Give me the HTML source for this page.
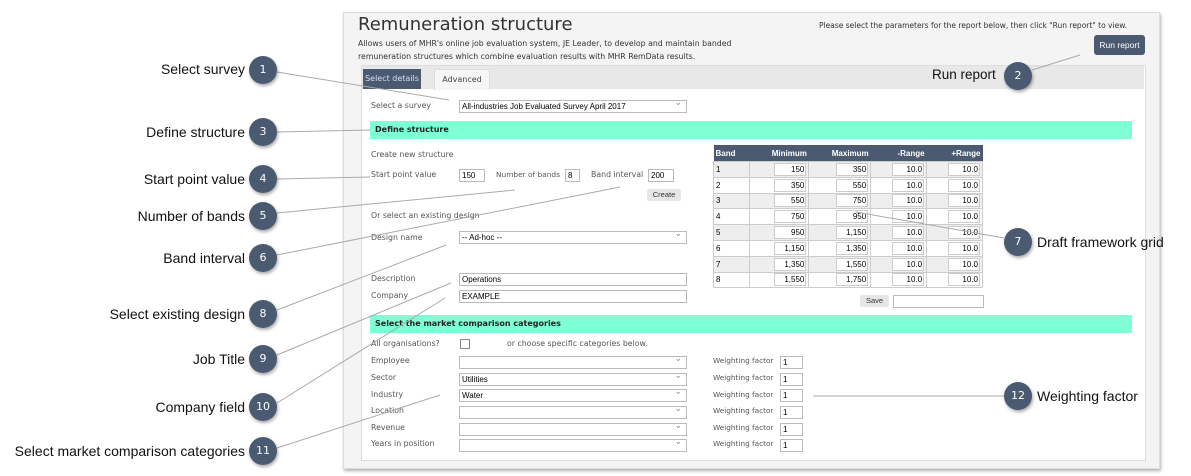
<!DOCTYPE html><html><head><style>
body{margin:0;width:1191px;height:476px;background:#fff;position:relative;font-family:"DejaVu Sans",sans-serif;overflow:hidden}
.a{position:absolute}
.lbl{position:absolute;font-size:14px;color:#111;text-align:right;font-family:"Liberation Sans",sans-serif;white-space:nowrap}
.c{position:absolute;width:28px;height:28px;border-radius:50%;background:#4a5a70;color:#fff;font-size:11px;text-align:center;line-height:28px;box-shadow:1px 2px 3px rgba(0,0,0,.35)}
.t{position:absolute;font-size:7.8px;color:#555;white-space:nowrap}
.in{position:absolute;background:#fff;border:1px solid #bbb;height:11px;font-size:8px;font-family:"Liberation Sans",sans-serif;line-height:11px;padding:0 2px;box-sizing:content-box;color:#000}
.sel::after{content:"⌄";position:absolute;right:4px;top:-4px;color:#888;font-size:9px}
.g{position:absolute;left:370px;width:762px;height:18px;background:#7fffd4;font-size:8px;font-weight:bold;color:#222;line-height:18px;text-indent:5px}
table{border-collapse:collapse;font-family:"Liberation Sans",sans-serif;font-size:8px}
td{border:1px solid #ccc;height:14.8px;padding:0 2px;vertical-align:middle}
th{background:#4a5a70;color:#fff;height:16px;font-weight:bold;text-align:right;padding:0 2px}
.n{display:inline-block;width:29px;height:11px;border:1px solid #ccc;background:#fff;text-align:right;padding-right:1px;line-height:11px}
tr:nth-child(even) td{background:#eee}
</style></head><body>
<div class="a" style="left:343px;top:12px;width:815px;height:455px;background:#f4f4f5;border:1px solid #ddd;box-shadow:1px 2px 3px rgba(0,0,0,.3)"></div>
<div class="a" style="left:358px;top:14px;font-size:18px;color:#333">Remuneration structure</div>
<div class="t" style="left:358px;top:37px;color:#333;line-height:13px">Allows users of MHR's online job evaluation system, JE Leader, to develop and maintain banded<br>remuneration structures which combine evaluation results with MHR RemData results.</div>
<div class="t" style="left:819px;top:21px;color:#333;font-size:7.5px">Please select the parameters for the report below, then click "Run report" to view.</div>
<div class="a" style="left:1094px;top:35px;width:51px;height:20px;background:#4a5a70;border-radius:3px;color:#fff;font-size:8.5px;font-family:'Liberation Sans',sans-serif;text-align:center;line-height:20px">Run report</div>
<div class="a" style="left:361px;top:65px;width:783px;height:394px;background:#fff;border:1px solid #ddd"></div>
<div class="a" style="left:362px;top:66px;width:782px;height:23px;background:#e8e8e8"></div>
<div class="a" style="left:363px;top:69px;width:58px;height:20px;background:#4a5a70;color:#dde;font-size:8px;text-align:center;line-height:20px">Select details</div>
<div class="a" style="left:434px;top:69px;width:54px;height:20px;background:#f6f6f6;border:1px solid #ddd;border-bottom:none;color:#444;font-size:8px;text-align:center;line-height:20px">Advanced</div>
<div class="t" style="left:371px;top:101px">Select a survey</div>
<div class="in sel" style="left:459px;top:100px;width:222px">All-industries Job Evaluated Survey April 2017</div>
<div class="g" style="top:121px">Define structure</div>
<div class="t" style="left:371px;top:150px">Create new structure</div>
<div class="t" style="left:371px;top:170px">Start point value</div>
<div class="in" style="left:459px;top:169px;width:20px">150</div>
<div class="t" style="left:496px;top:170px;font-size:7.4px">Number of bands</div>
<div class="in" style="left:565px;top:169px;width:9px">8</div>
<div class="t" style="left:591px;top:170px">Band interval</div>
<div class="in" style="left:648px;top:169px;width:20px">200</div>
<div class="a" style="left:647px;top:189px;width:34px;height:12px;background:#e6e6e6;border-radius:2px;font-size:7.5px;font-family:'Liberation Sans',sans-serif;text-align:center;line-height:12px;color:#333">Create</div>
<div class="t" style="left:371px;top:211px">Or select an existing design</div>
<div class="t" style="left:371px;top:233px">Design name</div>
<div class="in sel" style="left:459px;top:231px;width:222px">-- Ad-hoc --</div>
<div class="t" style="left:371px;top:274px">Description</div>
<div class="in" style="left:459px;top:273px;width:222px">Operations</div>
<div class="t" style="left:371px;top:291px">Company</div>
<div class="in" style="left:459px;top:290px;width:222px">EXAMPLE</div>
<table class="a" style="left:713px;top:145px;width:270px">
<tr><th style="text-align:left">Band</th><th>Minimum</th><th>Maximum</th><th>-Range</th><th>+Range</th></tr>
<tr><td>1</td><td align=right><span class=n>150</span></td><td align=right><span class=n>350</span></td><td align=right><span class=n>10.0</span></td><td align=right><span class=n>10.0</span></td></tr>
<tr><td>2</td><td align=right><span class=n>350</span></td><td align=right><span class=n>550</span></td><td align=right><span class=n>10.0</span></td><td align=right><span class=n>10.0</span></td></tr>
<tr><td>3</td><td align=right><span class=n>550</span></td><td align=right><span class=n>750</span></td><td align=right><span class=n>10.0</span></td><td align=right><span class=n>10.0</span></td></tr>
<tr><td>4</td><td align=right><span class=n>750</span></td><td align=right><span class=n>950</span></td><td align=right><span class=n>10.0</span></td><td align=right><span class=n>10.0</span></td></tr>
<tr><td>5</td><td align=right><span class=n>950</span></td><td align=right><span class=n>1,150</span></td><td align=right><span class=n>10.0</span></td><td align=right><span class=n>10.0</span></td></tr>
<tr><td>6</td><td align=right><span class=n>1,150</span></td><td align=right><span class=n>1,350</span></td><td align=right><span class=n>10.0</span></td><td align=right><span class=n>10.0</span></td></tr>
<tr><td>7</td><td align=right><span class=n>1,350</span></td><td align=right><span class=n>1,550</span></td><td align=right><span class=n>10.0</span></td><td align=right><span class=n>10.0</span></td></tr>
<tr><td>8</td><td align=right><span class=n>1,550</span></td><td align=right><span class=n>1,750</span></td><td align=right><span class=n>10.0</span></td><td align=right><span class=n>10.0</span></td></tr>
</table>
<div class="a" style="left:860px;top:295px;width:29px;height:12px;background:#e6e6e6;border-radius:2px;font-size:7.5px;font-family:'Liberation Sans',sans-serif;text-align:center;line-height:12px;color:#333">Save</div>
<div class="in" style="left:893px;top:295px;width:85px"></div>
<div class="g" style="top:315px">Select the market comparison categories</div>
<div class="t" style="left:371px;top:339px">All organisations?</div>
<div class="a" style="left:460px;top:339px;width:8px;height:8px;border:1px solid #888;background:#fff"></div>
<div class="t" style="left:507px;top:339px">or choose specific categories below.</div>
<div class="t" style="left:371px;top:356px">Employee</div><div class="in sel" style="left:459px;top:356px;width:222px"></div>
<div class="t" style="left:371px;top:373px">Sector</div><div class="in sel" style="left:459px;top:373px;width:222px">Utilities</div>
<div class="t" style="left:371px;top:390px">Industry</div><div class="in sel" style="left:459px;top:389px;width:222px">Water</div>
<div class="t" style="left:371px;top:406px">Location</div><div class="in sel" style="left:459px;top:406px;width:222px"></div>
<div class="t" style="left:371px;top:423px">Revenue</div><div class="in sel" style="left:459px;top:423px;width:222px"></div>
<div class="t" style="left:371px;top:439px">Years in position</div><div class="in sel" style="left:459px;top:439px;width:222px"></div>
<div class="t" style="left:713px;top:356px;font-size:7.3px">Weighting factor</div><div class="in" style="left:780px;top:356px;width:17px">1</div>
<div class="t" style="left:713px;top:373px;font-size:7.3px">Weighting factor</div><div class="in" style="left:780px;top:373px;width:17px">1</div>
<div class="t" style="left:713px;top:390px;font-size:7.3px">Weighting factor</div><div class="in" style="left:780px;top:389px;width:17px">1</div>
<div class="t" style="left:713px;top:406px;font-size:7.3px">Weighting factor</div><div class="in" style="left:780px;top:406px;width:17px">1</div>
<div class="t" style="left:713px;top:423px;font-size:7.3px">Weighting factor</div><div class="in" style="left:780px;top:423px;width:17px">1</div>
<div class="t" style="left:713px;top:439px;font-size:7.3px">Weighting factor</div><div class="in" style="left:780px;top:439px;width:17px">1</div>
<svg class="a" style="left:0;top:0" width="1191" height="476"><g stroke="#aaa" stroke-width="1" fill="none">
<line x1="277" y1="72" x2="449" y2="100"/><line x1="1032" y1="70" x2="1080" y2="55"/>
<line x1="277" y1="132" x2="370" y2="130"/><line x1="277" y1="179" x2="370" y2="177"/>
<line x1="277" y1="213" x2="515" y2="190"/><line x1="277" y1="255" x2="620" y2="187"/>
<line x1="1004" y1="238" x2="856" y2="212"/><line x1="277" y1="310" x2="446" y2="245"/>
<line x1="277" y1="355" x2="451" y2="283"/><line x1="277" y1="403" x2="445" y2="298"/>
<line x1="277" y1="448" x2="440" y2="395"/><line x1="1004" y1="396" x2="813" y2="396"/></g></svg>
<div class="lbl" style="right:946px;top:61px">Select survey</div><div class="c" style="left:249px;top:56px">1</div>
<div class="lbl" style="left:932px;top:67px;font-size:13.5px">Run report</div><div class="c" style="left:1004px;top:62px">2</div>
<div class="lbl" style="right:946px;top:124px">Define structure</div><div class="c" style="left:249px;top:118px">3</div>
<div class="lbl" style="right:946px;top:171px">Start point value</div><div class="c" style="left:249px;top:165px">4</div>
<div class="lbl" style="right:946px;top:208px">Number of bands</div><div class="c" style="left:249px;top:202px">5</div>
<div class="lbl" style="right:946px;top:250px">Band interval</div><div class="c" style="left:249px;top:244px">6</div>
<div class="lbl" style="left:1037px;top:234px">Draft framework grid</div><div class="c" style="left:1004px;top:228px">7</div>
<div class="lbl" style="right:946px;top:306px">Select existing design</div><div class="c" style="left:249px;top:300px">8</div>
<div class="lbl" style="right:946px;top:351px">Job Title</div><div class="c" style="left:249px;top:345px">9</div>
<div class="lbl" style="right:946px;top:399px">Company field</div><div class="c" style="left:249px;top:393px">10</div>
<div class="lbl" style="right:946px;top:443px">Select market comparison categories</div><div class="c" style="left:249px;top:437px">11</div>
<div class="lbl" style="left:1037px;top:388px">Weighting factor</div><div class="c" style="left:1004px;top:382px">12</div>
</body></html>
